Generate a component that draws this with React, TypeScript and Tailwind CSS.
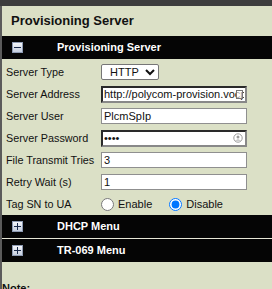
import React from "react"

const font = { fontFamily: '"Liberation Sans", Arial, sans-serif' }

const Toggle = ({ open }: { open: boolean }) => (
  <span className="relative inline-flex h-[11px] w-[11px] items-center justify-center border border-[#8e9bb3] bg-gradient-to-b from-[#f4f6fa] to-[#c5cede]">
    <span className="absolute h-px w-[7px] bg-[#1a2a4a]" />
    {!open && <span className="absolute h-[7px] w-px bg-[#1a2a4a]" />}
  </span>
)

const Bar = ({ title, open }: { title: string; open: boolean }) => (
  <div className="flex h-[23px] items-center bg-[#050505] text-[11px] font-bold text-white">
    <span className="ml-[10px] flex w-[45px]">
      <Toggle open={open} />
    </span>
    {title}
  </div>
)

const Row = ({ label, children }: { label: string; children: React.ReactNode }) => (
  <div className="flex h-[22px] items-center">
    <span className="w-[99px] pl-[4px] text-[10.8px] text-[#111]">{label}</span>
    {children}
  </div>
)

const fieldCls =
  "h-[16px] w-[146px] border border-[#8f8f8f] bg-white px-[2px] text-[11px] text-[#111] outline-none"
const darkCls =
  "h-[17px] w-[146px] border-2 border-[#2a2a2a] border-r-[#888] border-b-[#888] bg-white px-[1px] text-[11px] text-[#111] outline-none"

export default function App() {
  return (
    <div style={font} className="h-[289px] w-[272px] overflow-hidden bg-[#dbe0c6]">
      <div className="h-[6px] bg-[#3d3d3d]" />
      <div className="h-[283px] border-l-2 border-[#5b5b5b]">
        <div className="flex h-[30px] items-center pl-[9px] text-[13px] font-bold text-[#111]">
          Provisioning Server
        </div>
        <Bar title="Provisioning Server" open />
        <div className="pt-[2px]">
          <Row label="Server Type">
            <select className="h-[16px] w-[58px] rounded-[2px] border border-[#767676] bg-white pl-[4px] text-[11px] text-[#111]">
              <option>HTTP</option>
            </select>
          </Row>
          <Row label="Server Address">
            <div className="relative flex">
              <input className={darkCls} defaultValue="http://polycom-provision.vocp" />
              <span className="absolute right-[4px] top-[4px] h-[9px] w-[7px] border border-[#777] bg-white/60" />
            </div>
          </Row>
          <Row label="Server User">
            <input className={fieldCls} defaultValue="PlcmSpIp" />
          </Row>
          <Row label="Server Password">
            <div className="relative flex">
              <input type="password" className={darkCls + " text-[8px]"} defaultValue="abcd" />
              <svg className="absolute right-[4px] top-[3px]" width="10" height="10" viewBox="0 0 10 10">
                <circle cx="5" cy="5" r="4.2" fill="none" stroke="#999" strokeWidth="1" />
                <circle cx="5" cy="4" r="1.5" fill="#999" />
                <path d="M2.4 7.6 Q5 5.2 7.6 7.6" fill="#999" />
              </svg>
            </div>
          </Row>
          <Row label="File Transmit Tries">
            <input className={fieldCls} defaultValue="3" />
          </Row>
          <Row label="Retry Wait (s)">
            <input className={fieldCls} defaultValue="1" />
          </Row>
          <Row label="Tag SN to UA">
            <label className="flex items-center text-[11px] text-[#111]">
              <input type="radio" name="tag" className="m-0 h-[13px] w-[13px] accent-[#0075ff]" />
              <span className="ml-[4px]">Enable</span>
            </label>
            <label className="ml-[17px] flex items-center text-[11px] text-[#111]">
              <input type="radio" name="tag" defaultChecked className="m-0 h-[13px] w-[13px] accent-[#0075ff]" />
              <span className="ml-[4px]">Disable</span>
            </label>
          </Row>
        </div>
        <Bar title="DHCP Menu" open={false} />
        <div className="h-[1px] bg-[#e6e6d6]" />
        <Bar title="TR-069 Menu" open={false} />
        <div className="pt-[18px] text-[11px] font-bold text-[#111]">Note:</div>
      </div>
    </div>
  )
}
